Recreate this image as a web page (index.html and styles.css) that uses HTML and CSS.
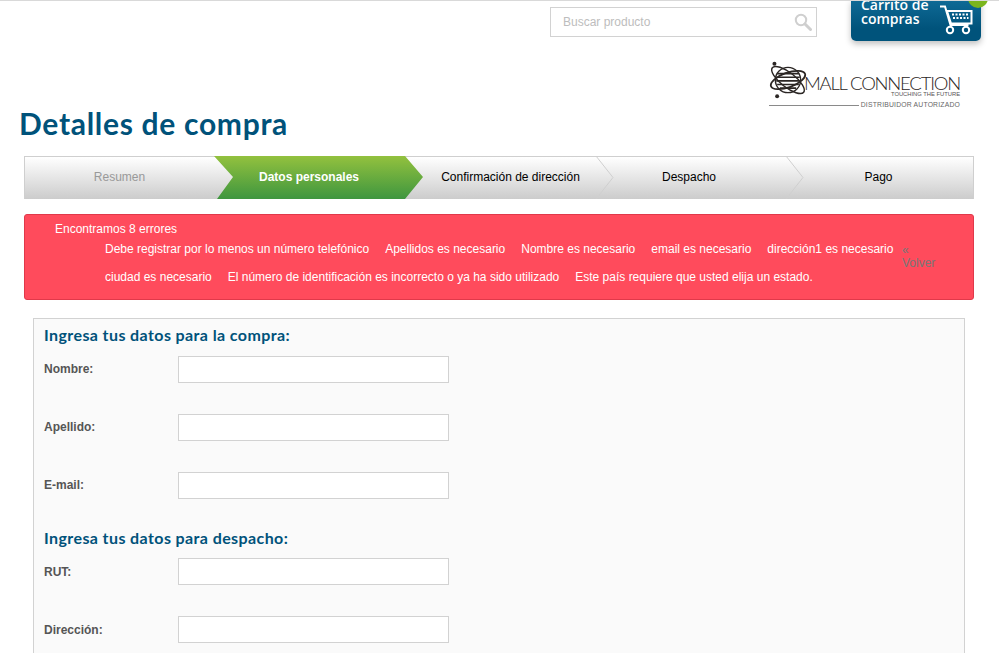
FILE: index.html
```html
<!DOCTYPE html>
<html>
<head>
<title>Detalles de compra</title>
<link rel="stylesheet" href="styles.css">
</head>
<body>
  <div class="page">

    <!-- Top bar -->
    <div class="topbar">
      <div class="search">
        <span class="search-text">Buscar producto</span>
        <svg class="search-icon" width="18" height="18" viewBox="0 0 18 18">
          <circle cx="7" cy="7" r="5.2" fill="none" stroke="#cfcfcf" stroke-width="2"/>
          <path d="M11 11l5.5 5.5" stroke="#cfcfcf" stroke-width="3" stroke-linecap="round"/>
        </svg>
      </div>
      <div class="cart">
        <div class="cart-text">Carrito de<br>compras</div>
        <svg class="cart-icon" width="34" height="31" viewBox="0 0 34 31">
          <path d="M1 2.5h5l5.5 18.5h18" fill="none" stroke="#fff" stroke-width="2"/>
          <path d="M8 7h24.500v12.500H12z" fill="none" stroke="#fff" stroke-width="2"/>
          <path d="M13 10.500h2M16.500 10.500h2M20 10.500h2M23.500 10.500h2M27 10.500h2M14 14h2M17.500 14h2M21 14h2M24.500 14h2M28 14h1.500" stroke="#fff" stroke-width="1.800"/>
          <circle cx="11" cy="26" r="3.200" fill="none" stroke="#fff" stroke-width="2"/>
          <circle cx="27" cy="26" r="3.200" fill="none" stroke="#fff" stroke-width="2"/>
        </svg>
        <span class="cart-badge"></span>
      </div>
    </div>

    <!-- Logo -->
    <div class="logo-row">
      <div class="logo">
        <svg class="logo-globe" width="38" height="38" viewBox="0 0 42 42">
          <circle cx="21" cy="21" r="14" fill="#fff" stroke="#2b2624" stroke-width="1.500"/>
          <path d="M9 14h24M8 18h26M8 22h26M9 26h24M12 30h18" stroke="#2b2624" stroke-width="1.800"/>
          <ellipse cx="21" cy="21" rx="20" ry="8" transform="rotate(-20 21 21)" fill="none" stroke="#2b2624" stroke-width="2"/>
          <ellipse cx="21" cy="21" rx="22" ry="8" transform="rotate(38 21 21)" fill="none" stroke="#2b2624" stroke-width="1.600"/>
          <circle cx="6" cy="3" r="2.200" fill="#2b2624"/>
          <circle cx="9" cy="39" r="2.200" fill="#2b2624"/>
        </svg>
        <div class="logo-name">MALL CONNECTION</div>
        <div class="logo-tag">TOUCHING THE FUTURE</div>
        <div class="logo-foot">
          <span class="logo-line"></span>
          <span class="logo-dist">DISTRIBUIDOR AUTORIZADO</span>
        </div>
      </div>
    </div>

    <h1 class="page-title">Detalles de compra</h1>

    <!-- Steps -->
    <div class="steps">
      <div class="step step-done">Resumen</div>
      <div class="step step-active">Datos personales</div>
      <div class="step step-wide">Confirmación de dirección
        <svg class="chevron" width="18" height="43" viewBox="0 0 18 43"><path d="M0 0l17 21.500L0 43" fill="none" stroke="#cfcfcf"/></svg>
      </div>
      <div class="step step-ship">Despacho
        <svg class="chevron" width="18" height="43" viewBox="0 0 18 43"><path d="M0 0l17 21.500L0 43" fill="none" stroke="#cfcfcf"/></svg>
      </div>
      <div class="step step-last">Pago</div>
    </div>

    <!-- Errors -->
    <div class="alert">
      <div class="alert-title">Encontramos 8 errores</div>
      <div class="alert-body">
        <ul class="error-list">
          <li>Debe registrar por lo menos un número telefónico</li>
          <li>Apellidos es necesario</li>
          <li>Nombre es necesario</li>
          <li>email es necesario</li>
          <li>dirección1 es necesario</li>
          <li>ciudad es necesario</li>
          <li>El número de identificación es incorrecto o ya ha sido utilizado</li>
          <li>Este país requiere que usted elija un estado.</li>
        </ul>
        <a class="back-link" href="#">«<br>Volver</a>
      </div>
    </div>

    <!-- Form -->
    <div class="panel">
      <h2 class="panel-title">Ingresa tus datos para la compra:</h2>
      <div class="field"><label>Nombre:</label><input type="text"></div>
      <div class="field"><label>Apellido:</label><input type="text"></div>
      <div class="field"><label>E-mail:</label><input type="text"></div>

      <h2 class="panel-title panel-title-second">Ingresa tus datos para despacho:</h2>
      <div class="field field-low"><label>RUT:</label><input type="text"></div>
      <div class="field field-low"><label>Dirección:</label><input type="text"></div>
    </div>

  </div>
</body>
</html>
```

FILE: styles.css
```css
/* Default Styling Here */
html, body {
  height: 100%;
  overflow: hidden;
}

body {
  margin: 0;
  background: #fff;
  color: #000;
  font-family: "Liberation Sans", Arial, sans-serif;
  font-size: 12px;
}

.page {
  box-sizing: border-box;
  height: 653px;
  overflow: hidden;
  border-top: 1px solid #d9d9d9;
  padding: 0 25px 0 24px;
}

/* Top bar */
.topbar {
  display: flex;
  justify-content: flex-end;
  align-items: flex-start;
  height: 59px;
  margin-right: -7px;
}

.search {
  display: flex;
  align-items: center;
  justify-content: space-between;
  box-sizing: border-box;
  width: 267px;
  height: 30px;
  margin-top: 6px;
  margin-right: 34px;
  padding: 0 4px 0 12px;
  border: 1px solid #d2d2d2;
}

.search-text {
  color: #bdbdbd;
  font-size: 12px;
}

.cart {
  position: relative;
  display: flex;
  justify-content: space-between;
  box-sizing: border-box;
  width: 130px;
  height: 41px;
  margin-top: -1px;
  padding: 0 8px 0 10px;
  background: linear-gradient(to bottom, #0f6a96, #00537b 70%);
  border-radius: 0 0 5px 5px;
  box-shadow: 0 3px 6px rgba(0,0,0,0.25);
}

/* little dark tab poking out on the top line */
.cart::before {
  content: "";
  position: absolute;
  top: 0;
  left: -10px;
  width: 10px;
  height: 1px;
  background: #0b3a55;
}

.cart-text {
  margin-top: -2px;
  color: #fff;
  font-family: "Open Sans", sans-serif;
  font-weight: 600;
  font-size: 14px;
  line-height: 14px;
}

.cart-icon {
  margin-top: 4px;
}

.cart-badge {
  position: absolute;
  top: -12px;
  right: -7px;
  width: 20px;
  height: 20px;
  border-radius: 50%;
  background: #7ab51d;
}

/* Logo */
.logo-row {
  display: flex;
  justify-content: flex-end;
  height: 50px;
  margin-right: 14px;
}

.logo {
  position: relative;
  width: 191px;
  height: 50px;
  color: #2b2624;
  text-align: right;
}

.logo-globe {
  position: absolute;
  left: 0;
  top: 1px;
}

.logo-name {
  padding-top: 16px;
  font-family: "Lato", sans-serif;
  font-weight: 300;
  font-size: 18.5px;
  line-height: 14px;
  letter-spacing: -1.2px;
}

.logo-tag {
  margin-top: 1px;
  font-size: 5.8px;
  line-height: 7px;
  color: #555;
}

.logo-foot {
  display: flex;
  align-items: center;
  gap: 2px;
  margin-top: 3px;
}

.logo-line {
  flex: 1;
  border-top: 1px solid #8a8a8a;
}

.logo-dist {
  font-size: 6.8px;
  line-height: 8px;
  letter-spacing: 0.2px;
  color: #666;
}

.page-title {
  margin: -5px 0 15px -5px;
  color: #00527a;
  font-family: "Lato", sans-serif;
  font-size: 30px;
  font-weight: 700;
  line-height: 36px;
  letter-spacing: 0.7px;
}

/* Steps */
.steps {
  display: flex;
  box-sizing: border-box;
  height: 43px;
  border: 1px solid #cfcfcf;
  border-bottom: 0;
  background: linear-gradient(to bottom, #fff, #ccc);
}

.step {
  position: relative;
  width: 190px;
  flex: none;
  box-sizing: border-box;
  line-height: 41px;
  text-align: center;
  color: #000;
}

.step-done {
  width: 189px;
  color: #999;
}

.step-active {
  z-index: 1;
  width: 209px;
  margin-right: -18px;
  padding-right: 19px;
  height: 43px;
  margin-top: -1px;
  line-height: 43px;
  background: linear-gradient(to bottom, #93c13e, #3e963f);
  color: #fff;
  font-weight: bold;
  clip-path: polygon(0 0, 191px 0, 209px 21px, 191px 100%, 3px 100%, 19px 21px);
}

.step-wide {
  width: 191px;
  padding-left: 20px;
}

.step-ship {
  padding-right: 4px;
}

.step-last {
  flex: 1;
  padding-right: 2px;
}

.chevron {
  position: absolute;
  top: -1px;
  right: -18px;
  z-index: 1;
}

/* Errors */
.alert {
  box-sizing: border-box;
  height: 86px;
  margin-top: 15px;
  padding: 7px 0 0 30px;
  background: #ff4b5c;
  border: 1px solid #e0394a;
  border-radius: 3px;
  color: #fff;
}

.alert-title {
  line-height: 14px;
}

.alert-body {
  display: flex;
  align-items: flex-start;
  margin-top: -1px;
}

.error-list {
  display: flex;
  flex-wrap: wrap;
  column-gap: 16px;
  width: 847px;
  margin: 0;
  padding: 0 0 0 50px;
  box-sizing: border-box;
  list-style: none;
  line-height: 28px;
  flex: none;
}

.back-link {
  margin-top: 9px;
  color: #777;
  text-decoration: none;
  line-height: 13px;
}

/* Form */
.panel {
  box-sizing: border-box;
  height: 400px;
  margin: 18px 9px 0;
  padding: 6px 10px;
  background: #fafafa;
  border: 1px solid #d2d2d2;
}

.panel-title {
  margin: 0 0 11px;
  color: #00527a;
  font-family: "Lato", sans-serif;
  font-size: 16px;
  font-weight: 700;
  line-height: 20px;
  letter-spacing: 0.4px;
}

.panel-title-second {
  margin-top: -2px;
  margin-bottom: 10px;
}

.field {
  display: flex;
  align-items: center;
  height: 27px;
  margin-bottom: 31px;
}

.field label {
  width: 134px;
  flex: none;
  padding-bottom: 2px;
  color: #555;
  font-weight: bold;
}

.field-low label {
  padding-bottom: 0;
}

.field input {
  box-sizing: border-box;
  width: 271px;
  height: 27px;
  margin: 0;
  padding: 0 6px;
  background: #fff;
  border: 1px solid #d2d2d2;
  border-radius: 0;
  outline: 0;
}
```
